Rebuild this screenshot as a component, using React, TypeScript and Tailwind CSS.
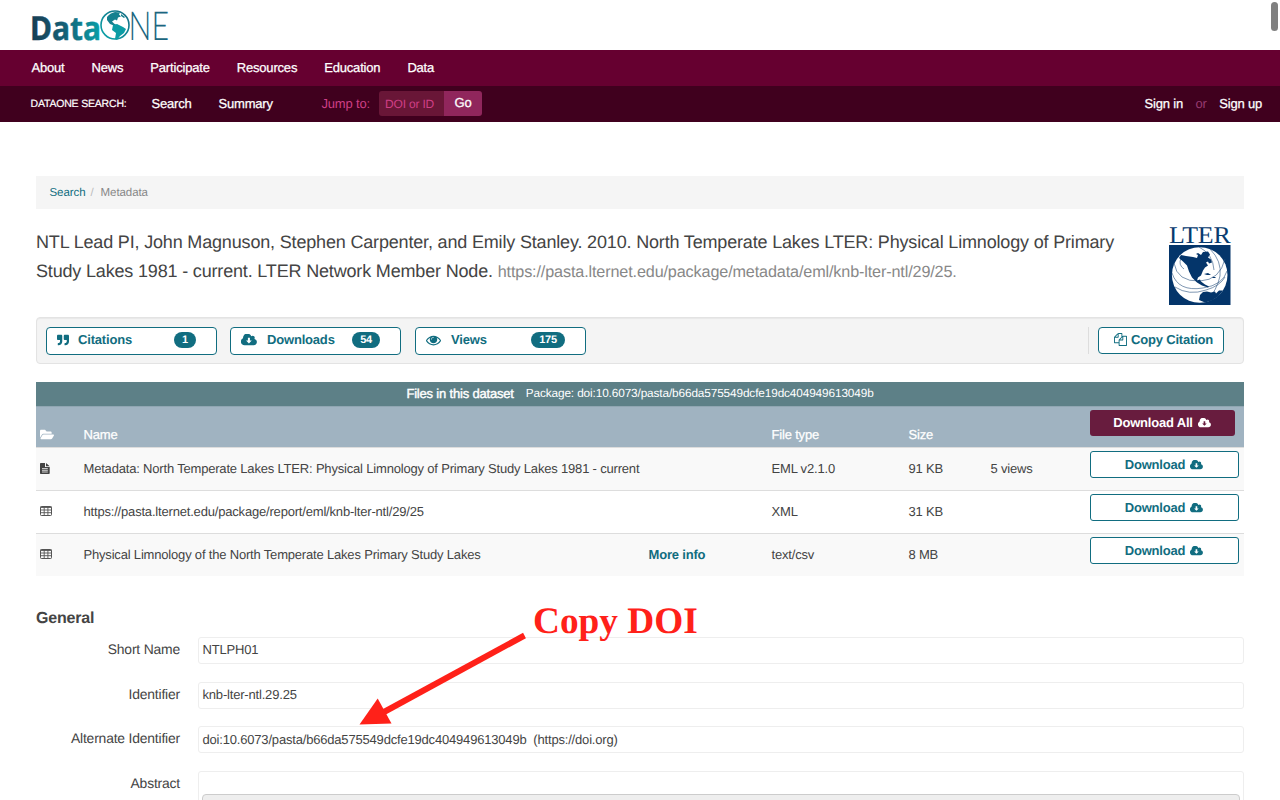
import type { ReactNode } from "react";
import { FaFolderOpen, FaQuoteRight } from "react-icons/fa";

function CloudIcon({ className, arrow = "#fff" }: { className: string; arrow?: string }) {
  return (
    <svg viewBox="0 0 1920 1408" className={className}>
      <path
        fill="currentColor"
        d="M1856 896q0 159-112.500 271.500t-271.500 112.500h-1088q-185 0-316.500-131.500t-131.500-316.500q0-130 70-240t188-165q-2-30-2-43 0-212 150-362t362-150q156 0 285.500 87t188.500 231q71-62 166-62 106 0 181 75t75 181q0 76-41 138 130 31 213.500 135.500t83.500 238.500z"
        transform="translate(50 60)"
      />
      <path fill={arrow} d="M830 430h240v330h220l-340 350-340-350h220z" />
    </svg>
  );
}

function EyeIcon() {
  return (
    <svg viewBox="0 300 1792 1300" className="h-[11px] w-[15px]" fill="currentColor">
      <path d="M1664 960q-152-236-381-353 61 104 61 225 0 185-131.500 316.500t-316.500 131.500-316.500-131.500-131.500-316.500q0-121 61-225-229 117-381 353 133 205 333.500 326.500t434.500 121.500 434.500-121.500 333.500-326.500zm-720-384q0-20-14-34t-34-14q-125 0-214.500 89.500t-89.500 214.500q0 20 14 34t34 14 34-14 14-34q0-86 61-147t147-61q20 0 34-14t14-34zm848 384q0 34-20 69-140 230-376.500 368.500t-499.500 138.500-499.500-139-376.500-368q-20-35-20-69t20-69q140-229 376.500-368t499.500-139 499.500 139 376.500 368q20 35 20 69z" />
      <circle cx="896" cy="850" r="300" fillOpacity=".45" />
    </svg>
  );
}

function CopyIcon() {
  return (
    <svg viewBox="0 0 1792 1792" className="size-[13px]" fill="currentColor">
      <path d="M1696 384q40 0 68 28t28 68v1216q0 40-28 68t-68 28h-960q-40 0-68-28t-28-68v-288h-544q-40 0-68-28t-28-68v-672q0-40 20-88t48-76l408-408q28-28 76-48t88-20h416q40 0 68 28t28 68v328q68-40 128-40h416zm-544 213l-299 299h299v-299zm-640-384l-299 299h299v-299zm196 647l316-316v-416h-384v416q0 40-28 68t-68 28h-416v640h512v-256q0-40 20-88t48-76zm956 804v-1152h-384v416q0 40-28 68t-68 28h-416v640h896z" />
    </svg>
  );
}

function FileIcon() {
  return (
    <svg viewBox="0 0 10 11" className="h-[11px] w-[10px]">
      <path fill="#444" d="M.8 0H5v4h4.700v6.300q0 .7-.7.7H.8q-.8 0-.8-.7V.7Q0 0 .8 0zM6 0l3.700 3.200H6z" />
      <path stroke="#f9f9f9" strokeWidth=".8" d="M2 5.600h5.800M2 7.300h5.800M2 9h5.800" />
    </svg>
  );
}

function TableIcon() {
  return (
    <svg viewBox="0 0 12 10" className="h-[10px] w-[12px]" fill="none" stroke="#555">
      <rect x=".5" y=".5" width="11" height="9" rx=".8" />
      <path d="M.5 1.300h11" strokeWidth="1.200" />
      <path d="M.5 4h11M.5 6.700h11M4.200 1v8.500M7.900 1v8.500" strokeWidth=".9" />
    </svg>
  );
}

function DataOneLogo() {
  return (
    <svg viewBox="0 0 140 45" className="h-[45px] w-[140px] overflow-visible">
      <defs>
        <linearGradient id="wordmark" gradientUnits="userSpaceOnUse" x1="2" y1="0" x2="70" y2="0">
          <stop offset="0" stopColor="#173f55" />
          <stop offset=".45" stopColor="#155f76" />
          <stop offset="1" stopColor="#0aa0a8" />
        </linearGradient>
        <linearGradient id="globe" x1="0" y1="1" x2="1" y2="0">
          <stop offset="0" stopColor="#0aa5aa" />
          <stop offset="1" stopColor="#156a82" />
        </linearGradient>
      </defs>
      <text x="-1" y="34.500" fontFamily="Noto Sans" fontWeight="700" fontSize="33" fill="url(#wordmark)" stroke="url(#wordmark)" strokeWidth=".4" textLength="71" lengthAdjust="spacingAndGlyphs">
        Data
      </text>
      <circle cx="84" cy="20" r="14" fill="#fff" stroke="url(#globe)" strokeWidth="1.600" />
      <path fill="#15808f" d="M76 12q3-4 8-5l5 .5-1 2 2 2-3 1-1 3-2-1-3 2 2 2 3 2-2 .5-5-2-3-4zM90 9l4 3-1 1-3-2z" />
      <path fill="#0b9ca4" d="M82 20l4-1 6 3 3 2-2 4-4 3-3 4-2-1 1-6-4-3z" />
      <text x="97.500" y="34.500" fontFamily="Lato" fontWeight="300" fontSize="40" fill="#1b6680" textLength="40.500" lengthAdjust="spacingAndGlyphs">
        NE
      </text>
    </svg>
  );
}

function LterLogo() {
  return (
    <svg viewBox="0 0 62 80" className="-mt-0.5 h-20 w-[62px] overflow-visible">
      <text x="0" y="18" fontFamily="Liberation Serif" fontSize="24" fill="#073b70" textLength="61.500" lengthAdjust="spacingAndGlyphs">
        LTER
      </text>
      <rect x="0" y="20" width="61.500" height="60" fill="#04356a" />
      <circle cx="30.700" cy="50" r="27.800" fill="#fff" />
      <g fill="none" stroke="#29517e" strokeWidth=".6">
        <path d="M5 38q3 19 26 18 20-1 25-22M3 48q6 19 31 15 20-3 24-17M6 62q14 9 31 3 14-4 19-13M30 22q14 7 15 23M41 24q12 12 10 27q-3 14-13 25M12 33q-3 7 3 11" />
      </g>
      <path
        fill="#04356a"
        d="M10 33l2-3 5 1 7 1 4 1 1-3-2-1 2-1 3 2 2-3 5-.5 2 3-2 3 3 2 1 3-3 1-1-2-2 1 2 3-3 2-2 3-2 5-3 2-1 3 3-1 1 2 4 3 4 2-1 1-6-2-5-3-5-5-3-6-2-6-4-4zM30 75l1-5 3-3 4-.5 4 1 4-1 1 2 3-3 4 0-5 6-6 4-7 2zM35 49l4-1 3 2-4 0zM43 52l3 0 1 1-3 0z"
      />
    </svg>
  );
}

function Metric({ icon, label, count, labelGap }: { icon: ReactNode; label: string; count: string; labelGap: string }) {
  return (
    <div className="flex h-7 w-[171px] items-center rounded-[4px] border border-[#116d80] bg-white pr-5 pb-0.5 pl-[10px] text-[#116d80]">
      {icon}
      <span className={`${labelGap} text-[13px] font-bold`}>{label}</span>
      <span className="ml-auto h-4 rounded-full bg-[#116d80] px-2 text-[11px] leading-4 font-bold text-white">{count}</span>
    </div>
  );
}

const files = [
  { kind: "file", name: "Metadata: North Temperate Lakes LTER: Physical Limnology of Primary Study Lakes 1981 - current", more: "", type: "EML v2.1.0", size: "91 KB", views: "5 views" },
  { kind: "table", name: "https://pasta.lternet.edu/package/report/eml/knb-lter-ntl/29/25", more: "", type: "XML", size: "31 KB", views: "" },
  { kind: "table", name: "Physical Limnology of the North Temperate Lakes Primary Study Lakes", more: "More info", type: "text/csv", size: "8 MB", views: "" },
];

const fields = [
  { label: "Short Name", value: "NTLPH01" },
  { label: "Identifier", value: "knb-lter-ntl.29.25" },
  { label: "Alternate Identifier", value: "doi:10.6073/pasta/b66da575549dcfe19dc404949613049b\u00a0 (https://doi.org)" },
];

export default function App() {
  return (
    <div className="relative h-[800px] w-[1280px] overflow-hidden bg-white font-['Liberation_Sans',Arial,sans-serif] text-[13px] tracking-[-0.185px] text-[#444] [text-rendering:geometricPrecision]">
      <header>
        <div className="flex h-[50px] pt-[5px] pl-[31px] tracking-normal">
          <DataOneLogo />
        </div>
        <nav className="flex h-9 items-center gap-[27px] bg-[#660030] pl-[31.500px] text-white [-webkit-text-stroke:0.25px_white]">
          <a>About</a>
          <a>News</a>
          <a>Participate</a>
          <a>Resources</a>
          <a>Education</a>
          <a>Data</a>
        </nav>
        <div className="flex h-9 items-center bg-[#40001e] pr-[18px] pl-[30.500px] text-white">
          <span className="w-[121px] pt-px text-[10.5px] [-webkit-text-stroke:0.2px_white]">DATAONE SEARCH:</span>
          <a className="w-[67px] [-webkit-text-stroke:0.25px_white]">Search</a>
          <a className="w-[103px] [-webkit-text-stroke:0.25px_white]">Summary</a>
          <span className="w-[57.500px] text-[#cf3f86]">Jump to:</span>
          <div className="flex pb-px">
            <span className="flex h-[25px] w-[65px] items-center rounded-l-[3px] bg-[#691637] pl-1.5 text-[12px] text-[#cf3f86]">DOI or ID</span>
            <span className="flex h-[25px] w-[38px] items-center justify-center rounded-r-[3px] bg-[#90265c] pb-px [-webkit-text-stroke:0.3px_white]">Go</span>
          </div>
          <div className="ml-auto flex gap-[12.500px]">
            <a className="[-webkit-text-stroke:0.25px_white]">Sign in</a>
            <span className="text-[#963a70]">or</span>
            <a className="[-webkit-text-stroke:0.25px_white]">Sign up</a>
          </div>
        </div>
      </header>

      <main className="px-9 pt-[54px]">
        <div className="flex h-[33px] items-center bg-[#f5f5f5] pt-[3px] pl-[13.500px] text-[11.500px] tracking-[-0.08px]">
          <a className="text-[#116d80]">Search</a>
          <span className="px-[5px] text-[#bbb]">/</span>
          <span className="ml-[2px] text-[#888]">Metadata</span>
        </div>

        <section className="flex h-[108px] justify-between pt-[18px] pr-[13px]">
          <p className="mt-px w-[1100px] text-[18px] leading-[29px] tracking-[-0.17px] whitespace-nowrap text-[#444]">
            NTL Lead PI, John Magnuson, Stephen Carpenter, and Emily Stanley. 2010. North Temperate Lakes LTER: Physical Limnology of Primary
            <br />
            Study Lakes 1981 - current. LTER Network Member Node.{" "}
            <span className="text-[16.200px] tracking-[-0.135px] text-[#888]">https://pasta.lternet.edu/package/metadata/eml/knb-lter-ntl/29/25.</span>
          </p>
          <LterLogo />
        </section>

        <section className="flex h-[47px] items-start rounded-[4px] border border-[#e3e3e3] bg-[#f4f4f4] pt-[9px] pr-[19px] pl-[9px] shadow-[inset_0_1px_1px_rgba(0,0,0,0.05)]">
          <div className="flex">
            <Metric icon={<FaQuoteRight className="size-3" />} label="Citations" count="1" labelGap="ml-[9px]" />
            <div className="ml-[13px]">
              <Metric icon={<CloudIcon className="h-3 w-4" />} label="Downloads" count="54" labelGap="ml-[10px]" />
            </div>
            <div className="ml-[14px]">
              <Metric icon={<EyeIcon />} label="Views" count="175" labelGap="ml-[10px]" />
            </div>
          </div>
          <div className="ml-auto h-[27px] border-l border-[#ddd] pl-[9px]">
            <div className="flex h-[27px] w-[126px] items-center gap-1 rounded-[4px] border border-[#116d80] bg-white pb-0.5 pl-[15px] font-bold whitespace-nowrap text-[#116d80]">
              <CopyIcon />
              Copy Citation
            </div>
          </div>
        </section>

        <section className="mt-[18px]">
          <div className="flex h-6 items-center justify-center gap-3 bg-[#5d8087] text-white">
            <span className="[-webkit-text-stroke:0.4px_white]">Files in this dataset</span>
            <span className="text-[11.800px] tracking-[-0.12px]">Package: doi:10.6073/pasta/b66da575549dcfe19dc404949613049b</span>
          </div>
          <div className="grid h-[41px] grid-cols-[47.500px_565px_123px_137px_82px_91px_1fr] border-t border-[#90a6b2] bg-[#a0b3c1] text-white">
            <FaFolderOpen className="mt-[21px] ml-1 h-[13px] w-[14px]" />
            <span className="col-span-2 mt-[18px] [-webkit-text-stroke:0.25px_white]">Name</span>
            <span className="mt-[18px] [-webkit-text-stroke:0.25px_white]">File type</span>
            <span className="col-span-2 mt-[18px] [-webkit-text-stroke:0.25px_white]">Size</span>
            <div className="mt-[3px] ml-2 flex h-[26px] w-[145px] items-center justify-center gap-[5px] rounded-[3px] bg-[#681c3e] font-bold">
              Download All <CloudIcon className="h-[10px] w-[13px]" arrow="#681c3e" />
            </div>
          </div>
          {files.map((file) => (
            <div
              key={file.name}
              className="grid h-[43px] grid-cols-[47.500px_565px_123px_137px_82px_91px_1fr] border-t border-[#ddd] bg-white nth-[2n+3]:bg-[#f9f9f9]"
            >
              <span className="mt-[15px] ml-1">{file.kind === "file" ? <FileIcon /> : <TableIcon />}</span>
              <span className="mt-[11px] whitespace-nowrap">{file.name}</span>
              <a className="mt-[11px] font-bold text-[#116d80]">{file.more}</a>
              <span className="mt-[11px]">{file.type}</span>
              <span className="mt-[11px]">{file.size}</span>
              <span className="mt-[11px]">{file.views}</span>
              <div className="mt-[3px] ml-2 flex h-[27px] w-[149px] items-center justify-center gap-[5px] rounded-[3px] border border-[#116d80] bg-white font-bold text-[#116d80]">
                Download <CloudIcon className="h-[10px] w-[13px]" />
              </div>
            </div>
          ))}
        </section>

        <section>
          <h2 className="mt-[31px] mb-[6px] text-[16px] leading-6 font-bold">General</h2>
          {fields.map((field) => (
            <div key={field.label} className="flex h-[44.700px]">
              <span className="mt-[2px] w-[144px] text-right text-[13.900px]">{field.label}</span>
              <div className="ml-[18px] flex h-[27px] flex-1 items-center rounded-[3px] border border-[#eee] pb-px pl-[3.500px]">{field.value}</div>
            </div>
          ))}
          <div className="flex h-[60px]">
            <span className="mt-[2px] w-[144px] text-right text-[13.900px]">Abstract</span>
            <div className="ml-[18px] flex-1 rounded-[3px] border border-[#eee] px-[3px] pt-[22px]">
              <div className="h-10 rounded-[4px] border border-[#ccc] bg-[#eee]" />
            </div>
          </div>
        </section>
      </main>

      <div className="absolute top-0.5 right-0.5 h-[29px] w-[7px] rounded-full bg-[#808080]" />
      <svg className="absolute top-[630px] left-[355px] h-[100px] w-[175px]" viewBox="355 630 175 100">
        <path d="M524.500 635.500L384 712" stroke="#ff2119" strokeWidth="6" />
        <path d="M359.500 724.500L377.700 698.500L391.500 723.500z" fill="#ff2119" />
      </svg>
      <div className="absolute top-[600px] left-[533px] font-['Liberation_Serif',serif] text-[37.300px] leading-[44px] font-bold tracking-normal whitespace-nowrap text-[#ff2119]">Copy DOI</div>
    </div>
  );
}
